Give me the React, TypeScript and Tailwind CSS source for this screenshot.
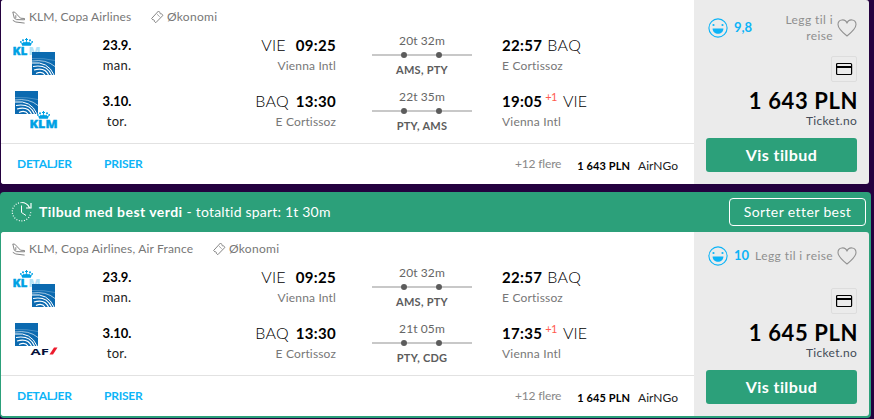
import React from "react";

type Stop = { time: string; code: string; place: string; plus?: string };
type Leg = { date: string; day: string; from: Stop; to: Stop; total: string; via: string; logo: "klm-copa" | "copa-klm" | "copa-af" };
type Offer = { airlines: string; airlinesClass: string; score: string; save: string; saveClass: string; ratingClass: string; price: string; legs: Leg[] };

const vienna = { code: "VIE", place: "Vienna Intl" };
const cortissoz = { code: "BAQ", place: "E Cortissoz" };

const offers: Offer[] = [
  {
    airlines: "KLM, Copa Airlines", airlinesClass: "w-[122px] tracking-[0.1px]", score: "9,8", save: "Legg til i reise", saveClass: "w-[60px]", ratingClass: "pb-0", price: "1 643 PLN",
    legs: [
      { date: "23.9.", day: "man.", from: { time: "09:25", ...vienna }, to: { time: "22:57", ...cortissoz }, total: "20t 32m", via: "AMS, PTY", logo: "klm-copa" },
      { date: "3.10.", day: "tor.", from: { time: "13:30", ...cortissoz }, to: { time: "19:05", plus: "+1", ...vienna }, total: "22t 35m", via: "PTY, AMS", logo: "copa-klm" },
    ],
  },
  {
    airlines: "KLM, Copa Airlines, Air France", airlinesClass: "w-[184px] tracking-[0.17px]", score: "10", save: "Legg til i reise", saveClass: "w-[84px]", ratingClass: "pb-2", price: "1 645 PLN",
    legs: [
      { date: "23.9.", day: "man.", from: { time: "09:25", ...vienna }, to: { time: "22:57", ...cortissoz }, total: "20t 32m", via: "AMS, PTY", logo: "klm-copa" },
      { date: "3.10.", day: "tor.", from: { time: "13:30", ...cortissoz }, to: { time: "17:35", plus: "+1", ...vienna }, total: "21t 05m", via: "PTY, CDG", logo: "copa-af" },
    ],
  },
];

function Copa({ x, y }: { x: number; y: number }) {
  return (
    <svg x={x} y={y} width="23" height="23" viewBox="0 0 23 23">
      <rect width="23" height="23" fill="#0b6ab0" />
      <g fill="none" stroke="#fff">
        <path d="M0 6.500Q12 6 23 8.500" strokeWidth=".5" opacity=".5" />
        <path d="M0 9Q14 7 23 14.500" strokeWidth=".8" opacity=".8" />
        <path d="M0 11Q16 9 22 23" strokeWidth="1" />
        <path d="M1 14.500Q15 12 19.500 23" strokeWidth="1.100" />
        <path d="M2 18Q13 15 16.500 23" strokeWidth="1.200" />
        <path d="M4 21.500Q10 18.500 13 23" strokeWidth="1.200" />
      </g>
    </svg>
  );
}

function Klm({ x, y, faded }: { x: number; y: number; faded?: boolean }) {
  return (
    <svg x={x} y={y} width="29" height="18" viewBox="0 0 29 18" fill="#00a1e4">
      <path d="M13 0h1v1h1v1h-1v1h-1V2h-1V1h1z" />
      <circle cx="10" cy="2.300" r="1" />
      <circle cx="17" cy="2.300" r="1" />
      <circle cx="7.800" cy="3.900" r=".9" />
      <circle cx="19.200" cy="3.900" r=".9" />
      <path d="M8 4.500l2 .5.500-1.400 1.500 1 1.500-1.500 1.500 1.500 1.500-1 .5 1.400 2-.5-1.200 3.300H9.200z" />
      <g fontFamily="'Open Sans', sans-serif" fontWeight="800" fontSize="10.500">
        <text x="-.5" y="16.500" stroke="#00a1e4" strokeWidth=".3" textLength={faded ? 15 : 28} lengthAdjust="spacingAndGlyphs">{faded ? "KL" : "KLM"}</text>
        {faded && <text x="15.500" y="16.500" opacity=".3" textLength="12" lengthAdjust="spacingAndGlyphs">M</text>}
      </g>
    </svg>
  );
}

function Logos({ kind }: { kind: Leg["logo"] }) {
  return (
    <svg className="shrink-0" width="50" height="43" viewBox="0 0 50 43">
      {kind === "klm-copa" ? (
        <>
          <Klm x={1} y={4} faded />
          <Copa x={20} y={18} />
        </>
      ) : (
        <>
          <Copa x={3} y={1} />
          {kind === "copa-klm" ? (
            <Klm x={18} y={21} />
          ) : (
            <>
              <text x="18.500" y="32.500" fill="#051039" fontFamily="'Open Sans', sans-serif" fontWeight="700" fontSize="9.500" textLength="18.500" lengthAdjust="spacingAndGlyphs">AF</text>
              <path d="M37.500 32.500L42 25.500h3.500L41 32.500z" fill="#ec1c2d" />
            </>
          )}
        </>
      )}
    </svg>
  );
}

function PlaneIcon() {
  return (
    <svg className="shrink-0" width="14" height="13" viewBox="0 0 14 13" fill="none" stroke="#777" strokeWidth=".9" strokeLinejoin="round">
      <path d="M.8 1l2 .2 5.700 6 4 .3v1.300L4.500 8.600 2.300 7.200z" />
      <path d="M3.800 7.300V4.200" />
      <path d="M.8 9.300l3 1.700 8.800 1.100" />
    </svg>
  );
}

function TicketIcon() {
  return (
    <svg className="shrink-0" width="13" height="14" viewBox="0 0 13 14" fill="none" stroke="#777" strokeWidth=".9" strokeLinejoin="round">
      <path d="M7.500 1l1.300 1.300c-.4 1 .5 1.700 1.400 1.400L12 5.300 4.800 12.700 3.300 11.300c.4-1-.5-1.800-1.400-1.400L.6 8.500z" />
      <path d="M6 4.200l3.200 3" strokeDasharray="1 .7" />
    </svg>
  );
}

function Smiley() {
  return (
    <svg className="shrink-0" width="20" height="20" viewBox="0 0 20 20" fill="none">
      <circle cx="10" cy="10" r="9.100" stroke="#0db4f7" strokeWidth="1.100" />
      <circle cx="5.500" cy="7" r="1.100" fill="#0db4f7" />
      <circle cx="14.500" cy="7" r="1.100" fill="#0db4f7" />
      <path d="M4.600 10.500h10.800c0 7-10.800 7-10.800 0z" fill="#0db4f7" />
    </svg>
  );
}

function Heart() {
  return (
    <svg className="shrink-0" width="20" height="18" viewBox="0 0 20 18" fill="none" stroke="#929292" strokeWidth="1.100" strokeLinejoin="round">
      <path d="M10 4.200C8.500-.5 1-.2 1 5.500 1 9.500 5 13 10 17c5-4 9-7.500 9-11.500C19-.2 11.500-.5 10 4.200z" />
    </svg>
  );
}

function CardIcon() {
  return (
    <svg width="18" height="14" viewBox="0 0 18 14">
      <rect x="1.600" y="1.500" width="15" height="11" rx="1" fill="none" stroke="#000" strokeWidth="1.200" />
      <path d="M1.600 4h15v2h-15z" />
    </svg>
  );
}

function ClockIcon() {
  return (
    <svg className="shrink-0" width="22" height="22" viewBox="0 0 22 22" fill="none" stroke="#fff">
      <path d="M10.500 1.500A9.200 9.200 0 1 0 19.700 11" strokeWidth="1.200" strokeDasharray="1 1.600" />
      <path d="M10.500 1.500c3.500 0 6.500 2 8 5.200M20 2v5h-5" strokeWidth="1.200" />
      <path d="M10.500 4.500v7l4.500 3" strokeWidth="1" />
    </svg>
  );
}

function Time({ children }: { children: string }) {
  return <span className="text-[15px] font-bold tracking-[0.3px] text-black">{children}</span>;
}

function Code({ children, className }: { children: string; className: string }) {
  return <span className={`text-[16px] font-light text-black ${className}`}>{children}</span>;
}

function LegRow({ leg }: { leg: Leg }) {
  return (
    <div className="flex h-14 pl-[11px]">
      <Logos kind={leg.logo} />
      <div className="ml-6 w-[62px] text-center text-black">
        <div className="mt-px h-5 text-[13px] leading-5 font-bold">{leg.date}</div>
        <div className="h-5 text-[13px] leading-5 tracking-[0.3px] text-[#222]">{leg.day}</div>
      </div>
      <div className="ml-[88px] w-[100px]">
        <div className="flex h-[22px] items-center justify-end leading-5">
          <Code className={leg.from.code === "VIE" ? "mr-2.5 tracking-[0.2px]" : "mr-[7px] tracking-[0.2px]"}>{leg.from.code}</Code>
          <Time>{leg.from.time}</Time>
        </div>
        <div className="mt-px text-right text-xs leading-[18px] tracking-[0.15px] text-[#777]">{leg.from.place}</div>
      </div>
      <div className="ml-9 flex w-[100px] flex-col items-center">
        <div className="text-xs leading-[14px] tracking-[0.1px] text-[#666]">{leg.total}</div>
        <div className="mt-[3px] flex h-[7px] w-full items-center">
          <span className="h-0.5 w-[29px] bg-[#c8c8c8]" />
          <span className="size-1.5 rounded-full bg-[#5c5c5c]" />
          <span className="h-0.5 w-[29px] bg-[#c8c8c8]" />
          <span className="size-1.5 rounded-full bg-[#5c5c5c]" />
          <span className="h-0.5 w-[30px] bg-[#c8c8c8]" />
        </div>
        <div className="mt-[5px] text-[11px] leading-[14px] font-bold tracking-[0.25px] text-[#5c5c5c]">{leg.via}</div>
      </div>
      <div className="ml-[30px]">
        <div className="flex h-[22px] items-center leading-5">
          <Time>{leg.to.time}</Time>
          {leg.to.plus && <span className="mb-2 ml-[3px] text-[11px] leading-3 tracking-[-0.5px] text-[#ff5a4f]">{leg.to.plus}</span>}
          <Code className={leg.to.code === "VIE" ? "ml-1.5 tracking-[0.1px]" : "ml-[5px] tracking-[0.4px]"}>{leg.to.code}</Code>
        </div>
        <div className="mt-px text-xs leading-[18px] tracking-[0.2px] text-[#777]">{leg.to.place}</div>
      </div>
    </div>
  );
}

function OfferCard({ offer }: { offer: Offer }) {
  return (
    <div className="mx-px flex h-[184px] w-[868px] overflow-hidden rounded-[3px] bg-[#ebebeb]">
      <div className="w-[693px] bg-white">
        <div className="flex h-[34px] items-center pl-[11px] text-xs text-[#777]">
          <PlaneIcon />
          <span className={`ml-[3px] shrink-0 whitespace-nowrap ${offer.airlinesClass}`}>{offer.airlines}</span>
          <TicketIcon />
          <span className="ml-[3px] tracking-[0.3px]">Økonomi</span>
        </div>
        <div className="h-[109px]">
          {offer.legs.map((leg) => (
            <LegRow key={leg.date} leg={leg} />
          ))}
        </div>
        <div className="flex h-[41px] items-center border-t border-[#e2e2e2] pr-4 pl-4 text-xs">
          <a className="w-[87px] font-bold tracking-[-0.25px] text-[#0db4f7]">DETALJER</a>
          <a className="font-bold tracking-[-0.25px] text-[#0db4f7]">PRISER</a>
          <span className="ml-auto tracking-[-0.15px] text-[#888]">+12 flere</span>
          <b className="mt-1 ml-4 text-[11px] tracking-[0.1px] text-black">{offer.price}</b>
          <span className="mt-1 ml-2 text-xs text-[#222]">AirNGo</span>
        </div>
      </div>
      <div className="flex w-[175px] flex-col pr-3 pl-3">
        <div className={`flex h-14 items-center pl-0.5 ${offer.ratingClass}`}>
          <Smiley />
          <span className="ml-1.5 text-[13px] font-bold text-[#0db4f7]">{offer.score}</span>
          <span className={`ml-auto text-right text-xs leading-4 tracking-[0.4px] text-[#8f8f8f] ${offer.saveClass}`}>{offer.save}</span>
          <span className="ml-1"><Heart /></span>
        </div>
        <div className="flex size-[26px] items-center justify-center self-end rounded-xs border border-[#ddd]">
          <CardIcon />
        </div>
        <div className="mt-1.5 -mr-px text-right text-[22px] leading-[26px] font-bold tracking-[0.6px] text-black">{offer.price}</div>
        <div className="text-right text-xs leading-[14px] tracking-[0.3px] text-[#444b58]">Ticket.no</div>
        <button className="mt-2.5 h-[34px] shrink-0 rounded-[3px] bg-[#2ca07a] text-base font-bold tracking-[0.4px] text-white">Vis tilbud</button>
      </div>
    </div>
  );
}

export default function App() {
  return (
    <div className="h-[419px] w-[874px] overflow-hidden bg-[#24013f] font-['Lato',sans-serif]">
      <OfferCard offer={offers[0]} />
      <div className="mt-2 h-[226px] w-[871px] rounded bg-[#2ca07a]">
        <div className="flex h-10 items-center pr-[5px] pl-[11px] text-sm text-white">
          <ClockIcon />
          <b className="ml-1.5 tracking-[0.45px]">Tilbud med best verdi</b>
          <span className="ml-1 tracking-[0.2px]">- totaltid spart: 1t 30m</span>
          <button className="ml-auto h-7 w-[137px] rounded border border-white text-sm tracking-[0.4px]">Sorter etter best</button>
        </div>
        <OfferCard offer={offers[1]} />
      </div>
    </div>
  );
}
